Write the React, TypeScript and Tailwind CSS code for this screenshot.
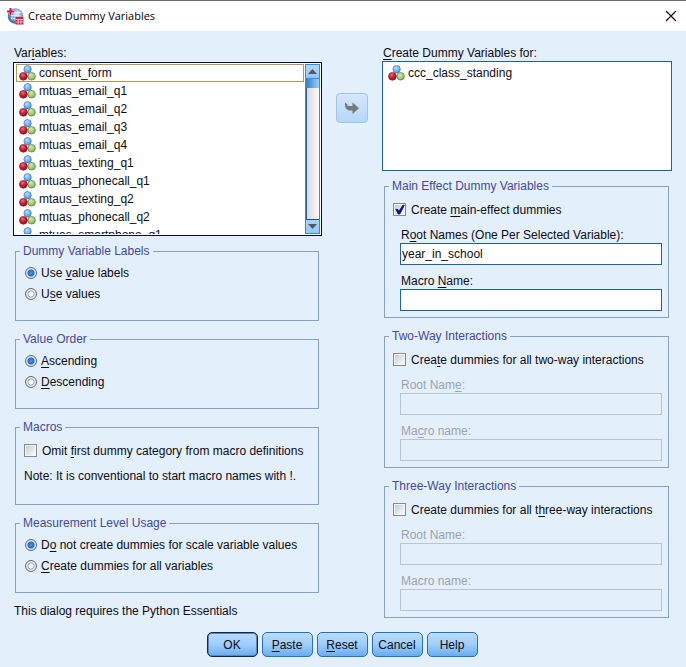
import { useState, type ReactNode } from 'react';

const variables = [
  'consent_form',
  'mtuas_email_q1',
  'mtuas_email_q2',
  'mtuas_email_q3',
  'mtuas_email_q4',
  'mtuas_texting_q1',
  'mtuas_phonecall_q1',
  'mtaus_texting_q2',
  'mtuas_phonecall_q2',
  'mtuas_smartphone_q1',
];

/** Text with its mnemonic letter, marked by a leading "&", underlined. */
function Mnemonic({ text }: { text: string }) {
  const at = text.indexOf('&');
  if (at < 0) return <>{text}</>;
  return (
    <>
      {text.slice(0, at)}
      <span className="underline underline-offset-2">{text[at + 1]}</span>
      {text.slice(at + 2)}
    </>
  );
}

/** Three balls: the nominal measurement level. */
function NominalIcon() {
  return (
    <svg viewBox="0 0 17 16" className="h-4 w-[17px] shrink-0" aria-hidden="true">
      <defs>
        <radialGradient id="ball-blue" cx="0.4" cy="0.3" r="0.8">
          <stop offset="0" stopColor="#b4dcff" />
          <stop offset="0.6" stopColor="#6fb0ee" />
          <stop offset="1" stopColor="#3f7fc4" />
        </radialGradient>
        <radialGradient id="ball-red" cx="0.4" cy="0.3" r="0.8">
          <stop offset="0" stopColor="#f07080" />
          <stop offset="0.45" stopColor="#cf2038" />
          <stop offset="1" stopColor="#8c0c20" />
        </radialGradient>
        <radialGradient id="ball-green" cx="0.4" cy="0.3" r="0.8">
          <stop offset="0" stopColor="#cdeba8" />
          <stop offset="0.6" stopColor="#9ccb74" />
          <stop offset="1" stopColor="#5f9440" />
        </radialGradient>
      </defs>
      <circle cx="8.6" cy="4.2" r="3.7" fill="url(#ball-blue)" stroke="#4a7db5" strokeWidth="0.7" />
      <circle cx="12.6" cy="11.3" r="3.8" fill="url(#ball-green)" stroke="#58823f" strokeWidth="0.7" />
      <circle cx="4.4" cy="11.3" r="3.9" fill="url(#ball-red)" stroke="#8c1526" strokeWidth="0.7" />
    </svg>
  );
}

function AppIcon() {
  return (
    <svg viewBox="0 0 17 17" className="size-[17px] shrink-0" aria-hidden="true">
      <defs>
        <radialGradient id="globe" cx="0.6" cy="0.35" r="0.75">
          <stop offset="0" stopColor="#dce9f7" />
          <stop offset="0.45" stopColor="#7fa6d6" />
          <stop offset="1" stopColor="#2c5798" />
        </radialGradient>
      </defs>
      <circle cx="8.5" cy="8" r="7.8" fill="url(#globe)" />
      <path d="M6 4.500h8M4 7.500h9M4 10.500h5M8 4v9M11 3v6M5 7v5" stroke="#eef5fd" strokeWidth="0.7" />
      <path d="M3.500 0v7M0 3.500h7" stroke="#fff" strokeWidth="3" />
      <path d="M3.500 0v7M0 3.500h7" stroke="#d3143c" strokeWidth="2" />
      <rect x="8.500" y="9" width="8" height="7.500" fill="#c72743" />
      <path d="M8.500 11.500h8M8.500 14h8M11.200 11v5M14 11v5" stroke="#f7ccd3" strokeWidth="0.8" />
    </svg>
  );
}

function Group({ title, children, className = '' }: { title: string; children: ReactNode; className?: string }) {
  return (
    <fieldset className={`ml-0.5 mr-[3px] min-w-0 border border-[#84a3c4] px-1 ${className}`}>
      <legend className="px-[3px] leading-4 text-[#444a9c]">{title}</legend>
      {children}
    </fieldset>
  );
}

function Radio({ name, label, defaultChecked }: { name: string; label: string; defaultChecked?: boolean }) {
  return (
    <label className="flex h-[21px] items-center gap-1 pl-[5px]">
      <input
        type="radio"
        name={name}
        defaultChecked={defaultChecked}
        className="size-3 shrink-0 appearance-none rounded-full border border-[#5b6a76] bg-[radial-gradient(circle,#ffffff_0_2px,#9aa4ae_3px,#e6eef6_4px)] checked:bg-[radial-gradient(circle,#4a9cf0_0,#2468b8_3px,#d6e8f8_4px)]"
      />
      <span>
        <Mnemonic text={label} />
      </span>
    </label>
  );
}

function Check({ label, checked, onChange }: { label: string; checked: boolean; onChange: (on: boolean) => void }) {
  return (
    <label className="flex h-[21px] items-center gap-[5px] pl-1">
      <span className="relative size-[13px] shrink-0">
        <input
          type="checkbox"
          checked={checked}
          onChange={(e) => onChange(e.target.checked)}
          className="block size-[13px] appearance-none border border-[#858b91] bg-linear-to-br from-[#c6c8ca] to-[#ffffff] shadow-[inset_0_0_0_1px_#f4f6f8]"
        />
        {checked && (
          <svg viewBox="0 0 13 13" className="pointer-events-none absolute inset-0 size-[13px]" aria-hidden="true">
            <path d="M2.800 6.300h1.900L6 8.300 9.800 2.200h1.600L6.900 11H5.200z" fill="#15107c" stroke="#15107c" strokeWidth="0.8" />
          </svg>
        )}
      </span>
      <span>
        <Mnemonic text={label} />
      </span>
    </label>
  );
}

function Field({ id, label, value = '', disabled }: { id: string; label: string; value?: string; disabled?: boolean }) {
  return (
    <div className="flex flex-col">
      <label htmlFor={id} className={`pl-px leading-4 ${disabled ? 'text-[#9ba4ad]' : ''}`}>
        <Mnemonic text={label} />
      </label>
      <input
        id={id}
        type="text"
        defaultValue={value}
        disabled={disabled}
        className="h-[22px] w-full border border-[#1f62a6] bg-white px-px disabled:border-[#bcc5ce] disabled:bg-[#e3effb]"
      />
    </div>
  );
}

function EffectGroup(props: {
  id: string;
  title: string;
  check: string;
  root: string;
  macro: string;
  rootValue?: string;
  initial?: boolean;
}) {
  const [on, setOn] = useState(props.initial ?? false);
  return (
    <Group title={props.title} className="pt-[5px]">
      <Check label={props.check} checked={on} onChange={setOn} />
      <div className="flex flex-col gap-2 pb-1.5 pl-[11px] pr-0.5 pt-[7px]">
        <Field id={`${props.id}-root`} label={props.root} value={props.rootValue} disabled={!on} />
        <Field id={`${props.id}-macro`} label={props.macro} disabled={!on} />
      </div>
    </Group>
  );
}

function ScrollBar() {
  return (
    <div className="flex w-[15px] shrink-0 flex-col border border-[#2f8fdc] bg-linear-to-r from-[#d6d7de] to-[#fafafc]">
      <button
        type="button"
        aria-label="Scroll up"
        className="flex h-[13px] items-center justify-center bg-linear-to-b from-[#b4dafd] to-[#8fc4f8]"
      >
        <svg viewBox="0 0 9 5" className="h-[5px] w-[9px]" aria-hidden="true">
          <path d="M4.500 0 9 5H0z" fill="#545a60" />
        </svg>
      </button>
      <div className="h-[10px] border-t border-[#2f8fdc] bg-linear-to-r from-[#2e7bc4] to-[#9fd0fa]" />
      <div className="flex-1 border-l border-[#2a6298]" />
      <button
        type="button"
        aria-label="Scroll down"
        className="flex h-[14px] items-center justify-center border-t border-[#1f4f88] bg-linear-to-b from-[#a9d4fc] to-[#94c8fa]"
      >
        <svg viewBox="0 0 9 5" className="h-[5px] w-[9px]" aria-hidden="true">
          <path d="M0 0h9L4.500 5z" fill="#545a60" />
        </svg>
      </button>
    </div>
  );
}

function DialogButton({ label, primary }: { label: string; primary?: boolean }) {
  return (
    <button
      type="button"
      className={`h-[25px] w-[51px] rounded-[5px] border bg-linear-to-b from-[#b9dcfd] via-[#9fcdfa] to-[#67adf0] text-center ${
        primary ? 'border-[#10284c] shadow-[inset_0_0_0_1px_#5d86b4]' : 'border-[#2272bd]'
      }`}
    >
      <Mnemonic text={label} />
    </button>
  );
}

export default function App() {
  const [omit, setOmit] = useState(false);
  return (
    <div className="flex min-h-screen flex-col bg-[#e3effb] font-['Liberation_Sans',Arial,sans-serif] text-[12px] leading-4 text-[#0c0c14]">
      <header className="flex h-[31px] items-center gap-1 border-t border-[#6a6a6a] bg-white pl-[7px] pr-[9px]">
        <AppIcon />
        <h1 className="flex-1 font-['Open_Sans','Noto_Sans',sans-serif] text-[11px] text-black">
          Create Dummy Variables
        </h1>
        <button type="button" aria-label="Close" className="size-3">
          <svg viewBox="0 0 12 12" className="size-3" aria-hidden="true">
            <path d="M1 1l10 10M11 1 1 11" stroke="#111" strokeWidth="1.200" fill="none" />
          </svg>
        </button>
      </header>

      <main className="grid grid-cols-[minmax(0,309fr)_32px_minmax(0,290fr)] gap-x-[14px] pl-[13px] pr-[14px] pt-[14px]">
        <section className="flex flex-col">
          <h2 id="variables" className="pl-px leading-[17px]">
            <Mnemonic text="Var&iables:" />
          </h2>
          <div className="flex h-[174px] gap-px border border-[#04046e] bg-white p-px">
            <ul role="listbox" aria-labelledby="variables" className="min-w-0 flex-1 overflow-hidden pl-px">
              {variables.map((name, i) => (
                <li
                  key={name}
                  role="option"
                  aria-selected={i === 0}
                  className={`flex h-[18px] items-center gap-[3px] border pl-0.5 ${
                    i === 0 ? 'border-[#a89c58]' : 'border-transparent'
                  }`}
                >
                  <NominalIcon />
                  {name}
                </li>
              ))}
            </ul>
            <ScrollBar />
          </div>

          <div className="mt-[7px] flex flex-col gap-2.5">
            <Group title="Dummy Variable Labels" className="pb-4 pt-[3px]">
              <Radio name="labels" label="Use &value labels" defaultChecked />
              <Radio name="labels" label="U&se values" />
            </Group>
            <Group title="Value Order" className="pb-4 pt-[3px]">
              <Radio name="order" label="&Ascending" defaultChecked />
              <Radio name="order" label="&Descending" />
            </Group>
            <Group title="Macros" className="pb-5 pt-[5px]">
              <Check label="Omit &first dummy category from macro definitions" checked={omit} onChange={setOmit} />
              <p className="pl-1 pt-[7px]">Note: It is conventional to start macro names with !.</p>
            </Group>
            <Group title="Measurement Level Usage" className="pb-4 pt-[3px]">
              <Radio name="level" label="D&o not create dummies for scale variable values" defaultChecked />
              <Radio name="level" label="&Create dummies for all variables" />
            </Group>
            <p className="pl-px">This dialog requires the Python Essentials</p>
          </div>
        </section>

        <div className="pt-12">
          <button
            type="button"
            aria-label="Move variable"
            className="flex h-[30px] w-8 items-center justify-center rounded-[4px] border border-[#9dc6ea] bg-linear-to-b from-[#d3e7fb] to-[#b5d7f8]"
          >
            <svg viewBox="0 0 14 12" className="h-3 w-3.5" aria-hidden="true">
              <path d="M0 0.500L2.500 2.500V4H7.500V0.500L14 6.300 7.500 12V8.500H5C2 8.500 0 6 0 3z" fill="#74787c" />
            </svg>
          </button>
        </div>

        <section className="flex flex-col">
          <h2 id="targets" className="pl-px leading-4">
            <Mnemonic text="&Create Dummy Variables for:" />
          </h2>
          <ul
            role="listbox"
            aria-labelledby="targets"
            className="h-[110px] border border-[#1f62a6] bg-white pl-[5px] pt-0.5"
          >
            <li role="option" aria-selected={false} className="flex h-[18px] items-center gap-[3px]">
              <NominalIcon />
              ccc_class_standing
            </li>
          </ul>

          <div className="mt-[7px] flex flex-col gap-2.5">
            <EffectGroup
              id="main"
              title="Main Effect Dummy Variables"
              check="Create &main-effect dummies"
              root="R&oot Names (One Per Selected Variable):"
              rootValue="year_in_school"
              macro="Macro &Name:"
              initial
            />
            <EffectGroup
              id="two"
              title="Two-Way Interactions"
              check="Crea&te dummies for all two-way interactions"
              root="Root Nam&e:"
              macro="Ma&cro name:"
            />
            <EffectGroup
              id="three"
              title="Three-Way Interactions"
              check="Create dummies for all t&hree-way interactions"
              root="Root Name:"
              macro="Macro name:"
            />
          </div>
        </section>
      </main>

      <footer className="flex justify-center gap-1 pb-2 pr-0.5 pt-[13px]">
        <DialogButton label="OK" primary />
        <DialogButton label="&Paste" />
        <DialogButton label="&Reset" />
        <DialogButton label="Cancel" />
        <DialogButton label="Help" />
      </footer>
    </div>
  );
}
